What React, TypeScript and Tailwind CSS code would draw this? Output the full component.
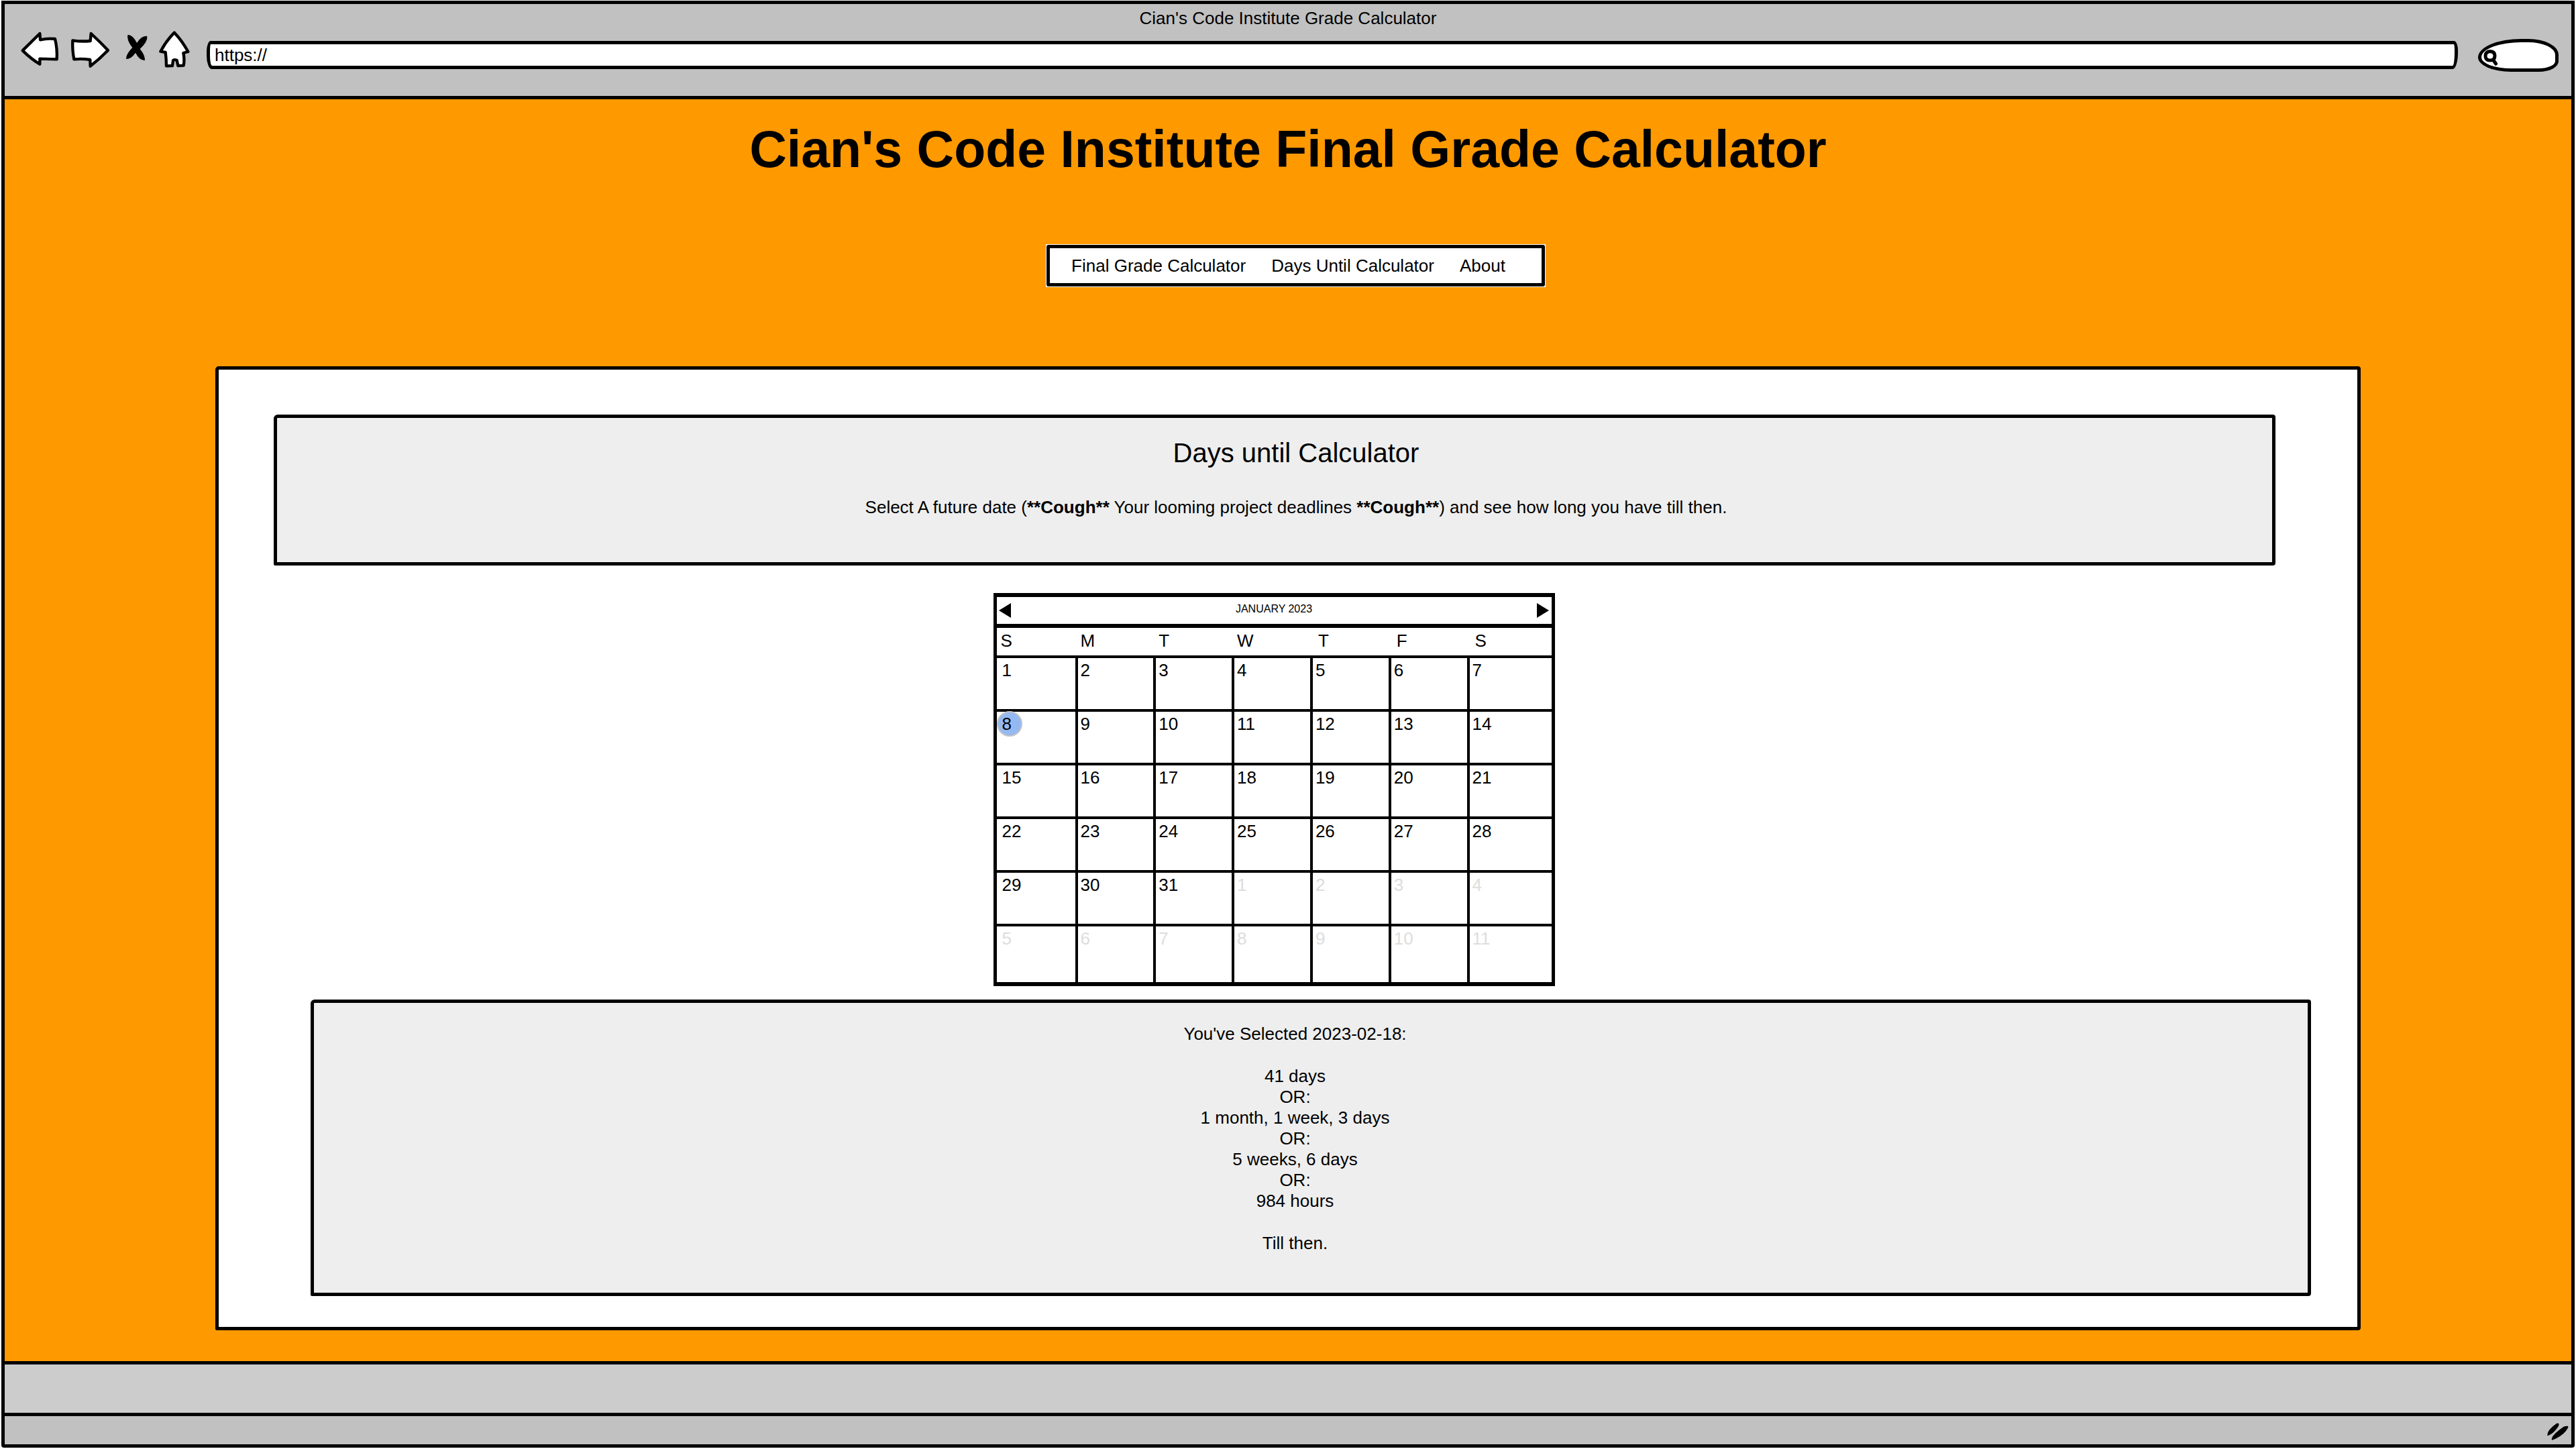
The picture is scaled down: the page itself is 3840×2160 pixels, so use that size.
import React from "react";

const weekdays = ["S", "M", "T", "W", "T", "F", "S"];

const weeks = [
  [1, 2, 3, 4, 5, 6, 7],
  [8, 9, 10, 11, 12, 13, 14],
  [15, 16, 17, 18, 19, 20, 21],
  [22, 23, 24, 25, 26, 27, 28],
  [29, 30, 31, 1, 2, 3, 4],
  [5, 6, 7, 8, 9, 10, 11],
];

const links = ["Final Grade Calculator", "Days Until Calculator", "About"];

function BrowserBar() {
  return (
    <header className="border-b-5 border-black bg-[#c1c1c1] pt-[5px] pb-9">
      <p className="text-center text-[26px] leading-8">Cian&apos;s Code Institute Grade Calculator</p>
      <div className="flex h-16 items-end pr-[19px] pl-[21px]">
        <button type="button" aria-label="Back" className="mr-[10px] shrink-0">
          <svg className="block h-16 w-16" viewBox="84 129 192 192" fill="#fff" stroke="#000" strokeWidth="13" strokeLinejoin="round">
            <path d="M178 150L101 226Q140 264 178 287L178 263L254 265Q257 218 246 174Q210 171 180 178Z" />
          </svg>
        </button>
        <button type="button" aria-label="Forward" className="mr-[18px] shrink-0">
          <svg className="block h-16 w-16" viewBox="306 129 192 192" fill="#fff" stroke="#000" strokeWidth="13" strokeLinejoin="round">
            <path d="M325 181Q365 187 404 183L407 150Q445 185 483 225Q445 264 404 296L403 267Q368 261 331 265Q323 225 325 181Z" />
          </svg>
        </button>
        <button type="button" aria-label="Stop" className="mr-[10px] shrink-0">
          <svg className="block h-16 w-10" viewBox="552 129 120 192">
            <path d="M571 156Q593 154 612 192Q634 158 658 162Q662 185 626 219Q649 247 648 270Q625 272 606 236Q587 264 564 264Q562 244 592 213Q566 180 571 156Z" />
          </svg>
        </button>
        <button type="button" aria-label="Home" className="mr-[22px] shrink-0">
          <svg className="block h-16 w-[52px]" viewBox="702 129 156 192" fill="#fff" stroke="#000" strokeWidth="13" strokeLinejoin="round">
            <path d="M780 146Q815 183 841 231L820 237Q826 265 821 293L796 294L791 270Q781 265 774 270L771 294L744 295Q744 265 740 234L718 230Q745 180 780 146Z" />
          </svg>
        </button>
        <input
          type="text"
          aria-label="Address"
          defaultValue="https://"
          className="mr-[30px] mb-1 h-[42px] min-w-0 flex-1 rounded-[6px_6px_8px_8px/16px_14px_24px_20px] border-5 border-black bg-white pr-2 pl-[7px] text-[26px] leading-8 outline-none"
        />
        <label className="relative block shrink-0">
          <input
            type="search"
            aria-label="Search"
            className="block h-[49px] w-[120px] rounded-[66px_46px_30px_50px/28px_24px_16px_22px] border-5 border-black bg-white pr-3 pl-8 text-[26px] outline-none"
          />
          <svg className="absolute top-4 left-2 h-6 w-6" viewBox="0 0 24 24" fill="none" stroke="#000" strokeWidth="5" strokeLinecap="round">
            <path d="M10 2.500Q17 3 17 9Q17 16 10 16Q3 16 3 9.500Q3 3 10 2.500ZM14.500 15L18.500 21" />
          </svg>
        </label>
      </div>
    </header>
  );
}

function Calendar() {
  return (
    <section aria-label="Calendar" className="w-full max-w-[837px] border-5 border-t-6 border-b-6 border-black bg-white">
      <div className="flex h-[46px] items-center justify-between border-b-6 border-black px-[3px]">
        <button type="button" aria-label="Previous month">
          <svg className="block h-[22px] w-[18px]" viewBox="0 0 18 22">
            <path d="M18 0V22L0 11Z" />
          </svg>
        </button>
        <p className="pb-1 text-base">JANUARY 2023</p>
        <button type="button" aria-label="Next month">
          <svg className="block h-[22px] w-[18px]" viewBox="0 0 18 22">
            <path d="M0 0V22L18 11Z" />
          </svg>
        </button>
      </div>
      <table className="w-full table-fixed border-separate border-spacing-0 text-[26px] leading-8">
        <colgroup>
          <col className="w-[121px]" />
          <col />
          <col />
          <col />
          <col />
          <col />
          <col className="w-[122px]" />
        </colgroup>
        <thead>
          <tr className="h-[45px]">
            {weekdays.map((day, i) => (
              <th key={i} scope="col" className="border-b-4 border-black p-0 pb-1 pl-1 text-left font-normal first:pl-1.5 nth-[n+5]:pl-2">
                {day}
              </th>
            ))}
          </tr>
        </thead>
        <tbody>
          {weeks.map((week, row) => (
            <tr key={row} className="group h-20 last:h-[83px]">
              {week.map((date, col) => {
                const selected = row === 1 && col === 0;
                const outside = (row === 4 && col > 2) || row === 5;
                return (
                  <td
                    key={col}
                    className="border-r-4 border-b-4 border-black p-0 pt-0.5 pl-1 align-top group-last:border-b-0 first:pl-2 last:border-r-0"
                  >
                    <button type="button" aria-pressed={selected} className={outside ? "relative block text-[#dddddd]" : "relative block text-black"}>
                      {selected && <span className="absolute top-[-3px] left-[-8px] size-[38px] rounded-full border-2 border-[#c4c4c4] bg-[#94b9f2]" />}
                      <span className="relative">{date}</span>
                    </button>
                  </td>
                );
              })}
            </tr>
          ))}
        </tbody>
      </table>
    </section>
  );
}

export default function App() {
  return (
    <div className="flex min-h-screen flex-col bg-white px-0.5 pt-px pb-0.5 font-['Liberation_Sans',Arial,sans-serif] text-black">
      <div className="flex flex-1 flex-col rounded-b-[4px] border-5 border-black">
        <BrowserBar />
        <div className="flex-1 bg-[#ff9900] px-[314px] pt-[34px] pb-[46px]">
          <h1 className="text-center text-[77px] leading-[80px] font-bold">Cian&apos;s Code Institute Final Grade Calculator</h1>
          <div className="mt-[102px] flex justify-center pl-[23px]">
            <nav className="bg-white p-px">
              <ul className="flex gap-[38px] rounded-[3px] border-5 border-black py-2.5 pr-[54px] pl-8 text-[26px] leading-8">
                {links.map((link) => (
                  <li key={link}>
                    <a href="#">{link}</a>
                  </li>
                ))}
              </ul>
            </nav>
          </div>
          <main className="mt-[118px] rounded-[5px_4px_4px_2px] border-5 border-black bg-white pt-[67px] pr-[69px] pb-[46px] pl-[82px]">
            <section className="mr-[53px] rounded-[6px_4px_4px_2px] border-5 border-black bg-[#eeeeee] pt-7 pb-[66px] pl-16 text-center">
              <h2 className="text-[40px] leading-12">Days until Calculator</h2>
              <p className="mt-[42px] text-[26px] leading-[31px]">
                Select A future date (<strong>**Cough**</strong> Your looming project deadlines <strong>**Cough**</strong>) and see how long you
                have till then.
              </p>
            </section>
            <div className="mt-[41px] mr-[55px] flex justify-center">
              <Calendar />
            </div>
            <section className="mt-5 ml-[55px] rounded-[6px_4px_4px_2px] border-5 border-black bg-[#eeeeee] pt-[31px] pr-[47px] pb-[58px] text-center text-[26px] leading-[31px]">
              <p>You&apos;ve Selected 2023-02-18:</p>
              <p className="my-8">
                41 days
                <br />
                OR:
                <br />
                1 month, 1 week, 3 days
                <br />
                OR:
                <br />
                5 weeks, 6 days
                <br />
                OR:
                <br />
                984 hours
              </p>
              <p>Till then.</p>
            </section>
          </main>
        </div>
        <footer>
          <div className="h-[77px] border-t-5 border-black bg-[#cccccc]" />
          <div className="flex h-[47px] items-center justify-end border-t-5 border-black bg-[#c1c1c1] pt-1 pr-[3px]">
            <svg className="block h-[30px] w-[35px]" viewBox="465 360 105 90">
              <path d="M472 422Q470 398 514 368Q528 366 522 380Q502 413 474 424ZM491 441Q490 420 545 383Q568 376 565 387Q545 425 493 443Z" />
            </svg>
          </div>
        </footer>
      </div>
    </div>
  );
}
